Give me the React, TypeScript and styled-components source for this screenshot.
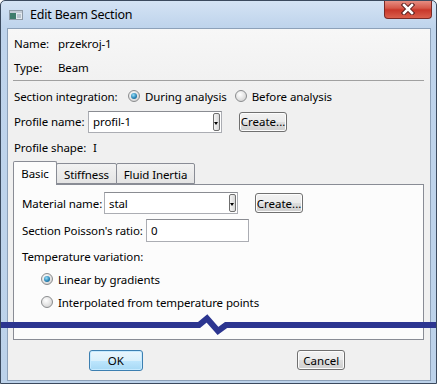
import React, { useState } from 'react';
import styled, { createGlobalStyle } from 'styled-components'

const Radio = (props: { checked?: boolean, label: string, onSelect?: () => void }) => (
    <RadioWrap onClick={props.onSelect}>
        <RadioDot $checked={!!props.checked} />
        <span>{props.label}</span>
    </RadioWrap>
)

const ComboBox = (props: { value: string }) => (
    <Combo>
        <ComboText>{props.value}</ComboText>
        <ComboArrow />
    </Combo>
)

const TABS = ['Basic', 'Stiffness', 'Fluid Inertia']

const App = () => {
    const [integration, setIntegration] = useState('during')
    const [temperature, setTemperature] = useState('linear')
    const [tab, setTab] = useState('Basic')

    return <>
        <GlobalStyle />
        <Window>
            <TitleBar>
                <svg width="14" height="10" viewBox="0 0 14 10">
                    <rect x="0.5" y="0.5" width="13" height="9" fill="#e4eaf0" stroke="#8e9aa6" />
                    <rect x="1" y="1" width="12" height="2" fill="#c3ccd6" />
                    <rect x="1" y="3" width="6" height="6" fill="#3f7d6c" />
                    <rect x="8" y="4" width="4" height="4" fill="#b8c4cf" />
                </svg>
                <Title>Edit Beam Section</Title>
                <CloseButton>
                    <svg width="14" height="12" viewBox="0 0 14 12">
                        <path d="M3 2 L11 10 M11 2 L3 10" stroke="#5a2020" strokeWidth="4.5" strokeLinecap="square" />
                        <path d="M3 2 L11 10 M11 2 L3 10" stroke="#ffffff" strokeWidth="2.5" strokeLinecap="square" />
                    </svg>
                </CloseButton>
            </TitleBar>
            <Client>
                <Row $height={24}>
                    <Label $width={44}>Name:</Label>
                    <span>przekroj-1</span>
                </Row>
                <Row $height={24}>
                    <Label $width={44}>Type:</Label>
                    <span>Beam</span>
                </Row>
                <Separator />
                <Row $height={24} $top={3}>
                    <Label $width={114}>Section integration:</Label>
                    <Radio label="During analysis" checked={integration === 'during'} onSelect={() => setIntegration('during')} />
                    <Radio label="Before analysis" checked={integration === 'before'} onSelect={() => setIntegration('before')} />
                </Row>
                <Row $height={27}>
                    <Label $width={74}>Profile name:</Label>
                    <ComboBox value="profil-1" />
                    <PushButton>Create...</PushButton>
                </Row>
                <Row $height={24}>
                    <Label $width={79}>Profile shape:</Label>
                    <span>I</span>
                </Row>
                <TabStrip>
                    {TABS.map((t, i) => (
                        <Tab key={t} $active={tab === t} $width={[44, 61, 79][i]} onClick={() => setTab(t)}>{t}</Tab>
                    ))}
                </TabStrip>
                <Panel>
                    {tab === 'Basic' && <>
                        <Row $height={24}>
                            <Label $width={82}>Material name:</Label>
                            <ComboBox value="stal" />
                            <PushButton>Create...</PushButton>
                        </Row>
                        <Row $height={25} $top={3}>
                            <Label $width={124}>Section Poisson's ratio:</Label>
                            <TextInput defaultValue="0" />
                        </Row>
                        <Row $height={23} $top={2}>
                            <span>Temperature variation:</span>
                        </Row>
                        <Row $height={22} $indent={19}>
                            <Radio label="Linear by gradients" checked={temperature === 'linear'} onSelect={() => setTemperature('linear')} />
                        </Row>
                        <Row $height={22} $indent={19} $top={1}>
                            <Radio label="Interpolated from temperature points" checked={temperature === 'points'} onSelect={() => setTemperature('points')} />
                        </Row>
                    </>}
                </Panel>
                <ButtonBar>
                    <PushButton $default>OK</PushButton>
                    <PushButton>Cancel</PushButton>
                </ButtonBar>
            </Client>
            <BreakLine width="437" height="28" viewBox="0 312 437 28">
                <path d="M0 325 H199 L207 318.5 L218 331 L226 325 H437" fill="none" stroke="#2c3590" strokeWidth="6" />
            </BreakLine>
        </Window>
    </>
}

const GlobalStyle = createGlobalStyle`
    body {
        margin: 0;
        background: #ffffff;
    }
`

const Window = styled.div`
    position: relative;
    box-sizing: border-box;
    width: 437px;
    height: 384px;
    display: flex;
    flex-direction: column;
    padding: 0 5px 2px 6px;
    border: 1px solid #3b4a5e;
    border-radius: 5px 5px 0 0;
    background: linear-gradient(#d4e3f4, #bfd4ec 26px, #bcd2ea);
    font-family: "Noto Sans", "Open Sans", sans-serif;
    font-size: 11.5px;
    letter-spacing: -0.1px;
    color: #000;
    overflow: hidden;
`

const TitleBar = styled.div`
    height: 27px;
    display: flex;
    align-items: center;
    padding-left: 2px;

    svg {
        flex-shrink: 0;
    }
`

const Title = styled.span`
    margin-left: 7px;
    font-size: 12.5px;
    letter-spacing: -0.2px;
    color: #000;
`

const CloseButton = styled.div`
    align-self: flex-start;
    margin: -1px -1px 0 auto;
    width: 48px;
    height: 19px;
    display: flex;
    align-items: center;
    justify-content: center;
    box-sizing: border-box;
    border: 1px solid #7a2a26;
    border-top: none;
    border-radius: 0 0 4px 4px;
    background: linear-gradient(#e8958a, #d5594a 45%, #c8372a 55%, #da5f4c);
`

const Client = styled.div`
    flex: 1;
    display: flex;
    flex-direction: column;
    padding: 2px 6px 0 5px;
    border: 1px solid #8da1b9;
    background: linear-gradient(#f7f7f7, #f0f0f0 60px);
`

const Row = styled.div<{ $height: number, $top?: number, $indent?: number }>`
    height: ${p => p.$height}px;
    margin-top: ${p => p.$top || 0}px;
    padding-left: ${p => 1 + (p.$indent || 0)}px;
    display: flex;
    align-items: center;
    white-space: nowrap;
`

const Label = styled.span<{ $width: number }>`
    width: ${p => p.$width}px;
    flex-shrink: 0;
`

const Separator = styled.div`
    height: 1px;
    margin-top: 1px;
    background: #a0a0a0;
`

const RadioWrap = styled.label`
    display: flex;
    align-items: center;
    gap: 5px;
    margin-right: 8px;
    cursor: default;
`

const RadioDot = styled.span<{ $checked: boolean }>`
    position: relative;
    width: 12px;
    height: 12px;
    box-sizing: border-box;
    border-radius: 50%;
    border: 1px solid #8a8c8e;
    background: radial-gradient(circle at 40% 35%, #ffffff, #e2e2e2 55%, #c8c8c8);

    &::after {
        content: '';
        display: ${p => p.$checked ? 'block' : 'none'};
        position: absolute;
        left: 2px;
        top: 2px;
        width: 6px;
        height: 6px;
        border-radius: 50%;
        background: radial-gradient(circle at 40% 35%, #9be0f8, #2a86b8 55%, #0d4f78);
    }
`

const Combo = styled.div`
    width: 134px;
    height: 22px;
    box-sizing: border-box;
    display: flex;
    align-items: center;
    border: 1px solid #abadb3;
    border-top-color: #8a8c92;
    background: #fff;
    padding: 1px 1px 1px 4px;
    flex-shrink: 0;
`

const ComboText = styled.span`
    flex: 1;
`

const ComboArrow = styled.span`
    position: relative;
    width: 7px;
    height: 18px;
    box-sizing: border-box;
    border: 1px solid #6f6f6f;
    border-radius: 2px;
    background: linear-gradient(90deg, #f4f4f4, #d8d8d8);

    &::after {
        content: '';
        position: absolute;
        left: 0;
        top: 8px;
        border-left: 2.5px solid transparent;
        border-right: 2.5px solid transparent;
        border-top: 3px solid #000;
    }
`

const PushButton = styled.button<{ $default?: boolean }>`
    width: ${p => p.$default ? 54 : 48}px;
    height: ${p => p.$default ? 21 : 20}px;
    margin-left: 17px;
    padding: 0;
    box-sizing: border-box;
    font: inherit;
    color: #000;
    border: 1px solid ${p => p.$default ? '#3c7fb1' : '#707070'};
    border-radius: 3px;
    background: ${p => p.$default
        ? 'linear-gradient(#eaf6fd, #d9f0fc 50%, #bee6fd 51%, #a7d9f5)'
        : 'linear-gradient(#f2f2f2, #ebebeb 50%, #dddddd 51%, #cfcfcf)'};
    box-shadow: inset 0 0 0 1px ${p => p.$default ? '#c6eaff' : '#fcfcfc'};
    flex-shrink: 0;
`

const TabStrip = styled.div`
    margin-top: 2px;
    height: 23px;
    display: flex;
    align-items: flex-end;
`

const Tab = styled.div<{ $active: boolean, $width: number }>`
    position: relative;
    z-index: ${p => p.$active ? 1 : 0};
    width: ${p => p.$width}px;
    height: ${p => p.$active ? 24 : 21}px;
    margin-bottom: ${p => p.$active ? -1 : 0}px;
    margin-right: -1px;
    box-sizing: border-box;
    display: flex;
    align-items: center;
    justify-content: center;
    padding-top: ${p => p.$active ? 0 : 1}px;
    border: 1px solid #898c95;
    border-bottom: ${p => p.$active ? 'none' : '1px solid #898c95'};
    border-radius: 2px 2px 0 0;
    background: ${p => p.$active ? '#fcfcfc' : 'linear-gradient(#f2f2f2, #e4e4e4)'};
    cursor: default;
`

const Panel = styled.div`
    height: 156px;
    box-sizing: border-box;
    padding: 6px 7px 0 7px;
    border: 1px solid #898c95;
    background: #fcfcfc;
`

const TextInput = styled.input`
    width: 103px;
    height: 23px;
    box-sizing: border-box;
    padding: 0 4px;
    font: inherit;
    border: 1px solid #abadb3;
    border-top-color: #8a8c92;
    background: #fff;
    outline: none;
`

const ButtonBar = styled.div`
    margin-top: 10px;
    display: grid;
    grid-template-columns: 1fr 1fr;
    justify-items: center;

    button {
        margin-left: 0;
    }
`

const BreakLine = styled.svg`
    position: absolute;
    left: -1px;
    top: 311px;
    pointer-events: none;
`

export default App;
